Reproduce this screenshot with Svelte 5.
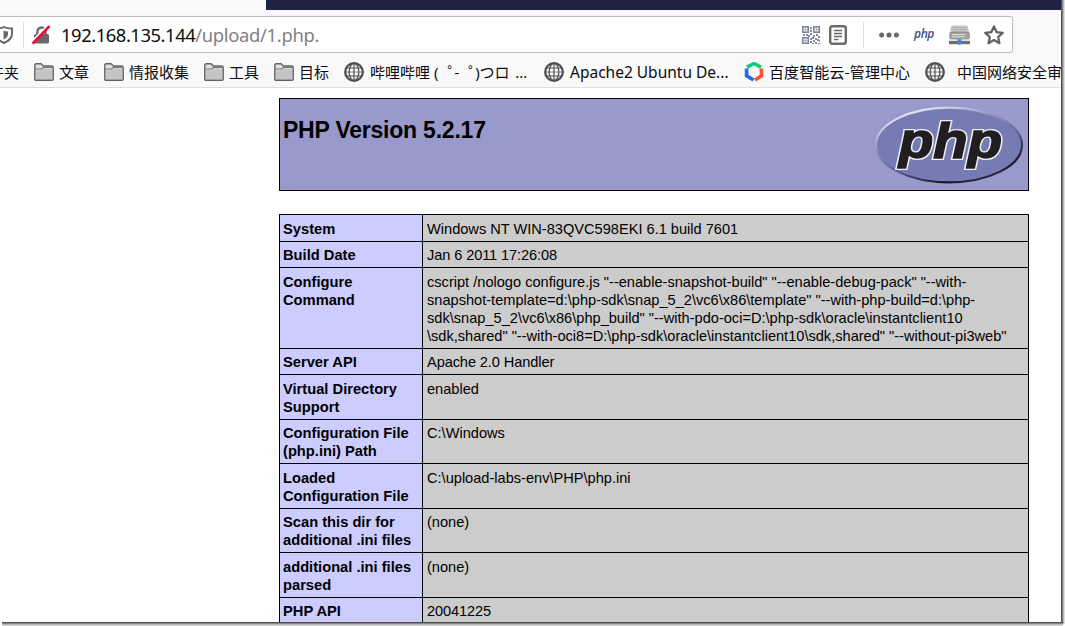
<script>
  const rows = [
    { h: 27, key: ['System'], value: ['Windows NT WIN-83QVC598EKI 6.1 build 7601'] },
    { h: 26, key: ['Build Date'], value: ['Jan 6 2011 17:26:08'], tight: true },
    {
      h: 81,
      key: ['Configure', 'Command'],
      value: [
        'cscript /nologo configure.js "--enable-snapshot-build" "--enable-debug-pack" "--with-',
        'snapshot-template=d:\\php-sdk\\snap_5_2\\vc6\\x86\\template" "--with-php-build=d:\\php-',
        'sdk\\snap_5_2\\vc6\\x86\\php_build" "--with-pdo-oci=D:\\php-sdk\\oracle\\instantclient10',
        '\\sdk,shared" "--with-oci8=D:\\php-sdk\\oracle\\instantclient10\\sdk,shared" "--without-pi3web"'
      ]
    },
    { h: 26, key: ['Server API'], value: ['Apache 2.0 Handler'], tight: true },
    { h: 45, key: ['Virtual Directory', 'Support'], value: ['enabled'] },
    { h: 44, key: ['Configuration File', '(php.ini) Path'], value: ['C:\\Windows'] },
    { h: 45, key: ['Loaded', 'Configuration File'], value: ['C:\\upload-labs-env\\PHP\\php.ini'] },
    { h: 44, key: ['Scan this dir for', 'additional .ini files'], value: ['(none)'] },
    { h: 45, key: ['additional .ini files', 'parsed'], value: ['(none)'] },
    { h: 26, key: ['PHP API'], value: ['20041225'], tight: true }
  ];
  const qr = [
    [0, 0], [11, 0], [0, 11]
  ];
  const bits = [[8,1],[8,4],[8,7],[1,8],[4,8],[11,9],[14,8],[16,10],[10,11],[13,12],[11,14],[15,13],[17,14],[13,16],[10,17],[16,17],[8,12],[8,15],[6,9]];
</script>

{#snippet folder()}
  <svg class="folder" width="20" height="18" viewBox="0 0 20 18">
    <path d="M.8 16V2.300Q.8.8 2.300.8H7L9.400 3h8.300q1.500 0 1.500 1.500V16q0 1.200-1.200 1.200H2Q.8 17.200.8 16Z" fill="#e0e0e2" stroke="#626264" stroke-width="1.400" />
    <path d="M1.500 6h6l2-1.500h9" fill="none" stroke="#727274" stroke-width="1.200" />
    <path d="M2 7.200h6l2-1.500h8V16H2Z" fill="#c5c5c7" />
  </svg>
{/snippet}

{#snippet globe()}
  <svg class="globe" width="20" height="20" viewBox="0 0 20 20" fill="none" stroke="#515153">
    <circle cx="10" cy="10" r="8.800" stroke-width="2.300" />
    <ellipse cx="10" cy="10" rx="4.800" ry="8.600" stroke-width="1.300" />
    <path d="M10 1v18M2.500 6h15M2.500 14h15" stroke-width="1.200" />
    <path d="M1.500 10h17" stroke-width=".7" />
  </svg>
{/snippet}

<div class="stage">
  <div class="window">
    <div class="title"></div>
    <div class="nav">
      <div class="urlbar">
        <svg class="shield" width="14" height="18" viewBox="0 0 14 18">
          <path d="M-4 2.500Q2 2.200 4 1q2 1.200 8 1.500V8q0 5.500-8 9-8-3.500-8-9Z" fill="none" stroke="#68686a" stroke-width="2" />
          <path d="M4 4.500q2 .8 4.500 1V8q0 3.500-4.500 5.500Z" fill="#68686a" transform="translate(-.5)" />
        </svg>
        <i class="sep left"></i>
        <svg class="lock" width="20" height="20" viewBox="0 0 20 20">
          <path d="M5.500 10V6.500a4 4 0 0 1 8 0V10" fill="none" stroke="#68686a" stroke-width="2.400" />
          <rect x="2" y="9" width="15" height="9.500" rx="1.500" fill="#68686a" />
          <path d="M-1 17.500 16 .2" stroke="#fff" stroke-width="2" />
          <path d="M.5 18.500 17.500 1.200" stroke="#ff0039" stroke-width="2.600" />
        </svg>
        <div class="url"><b>192.168.135.144</b>/upload/1.php.</div>
        <div class="actions">
          <svg width="18" height="18" viewBox="0 0 18 18">
            {#each qr as [x, y]}
              <rect x={x + 0.8} y={y + 0.8} width="5.400" height="5.400" fill="none" stroke="#7e8697" stroke-width="1.600" />
              <rect x={x + 2.6} y={y + 2.6} width="1.800" height="1.800" fill="#7e8697" />
            {/each}
            {#each bits as [x, y]}
              <rect {x} {y} width="2" height="2" fill="#858c9b" />
            {/each}
          </svg>
          <svg class="reader" width="18" height="20" viewBox="0 0 18 20">
            <rect x="1.200" y="1.200" width="15.600" height="17.600" rx="2" fill="#fff" stroke="#6a6a6c" stroke-width="2.400" />
            <path d="M5 5.500h8M5 8.500h8M5 11.500h8M5 14.500h4.500" stroke="#6a6a6c" stroke-width="1.300" />
          </svg>
          <i class="sep right"></i>
          <svg class="dots" width="20" height="6" viewBox="0 0 20 6" fill="#68686a"><circle cx="2.600" cy="3" r="2.500" /><circle cx="10" cy="3" r="2.500" /><circle cx="17.400" cy="3" r="2.500" /></svg>
          <span class="mini">php</span>
          <svg class="drive" width="21" height="20" viewBox="0 0 21 20">
            <path d="M3.500.5h14q1 0 1.300 1L20.300 8H.7L2.200 1.500q.3-1 1.300-1Z" fill="#c6c6c6" />
            <path d="M4 2.500h13M3.400 4.500h14.200M2.800 6.500h15.400" stroke="#acacac" stroke-width=".8" />
            <rect x=".8" y="7.500" width="19.500" height="6.500" rx="1" fill="#a3a3a3" stroke="#858585" stroke-width=".8" />
            <path d="M3 9.500h13M3 11.800h13" stroke="#dcdcdc" />
            <rect x="8.500" y="14" width="4" height="2.500" fill="#888" />
            <rect y="15.800" width="21" height="3.400" fill="#707070" />
            <path d="m10.500 14.500 3 3-3 2.500-3-2.500Z" fill="#3f83ee" />
          </svg>
          <svg class="star" width="20" height="20" viewBox="0 0 20 20"><path d="m10 1.500 2.600 5.600 6.100.7-4.500 4.200 1.200 6.200-5.400-3.100-5.400 3.100 1.200-6.200L1.300 7.800l6.100-.7Z" fill="none" stroke="#626264" stroke-width="2.300" stroke-linejoin="round" /></svg>
        </div>
      </div>
    </div>
    <div class="bookmarks">
      <div class="mark first">件夹</div>
      <div class="mark m70">{@render folder()}<span>文章</span></div>
      <div class="mark m100">{@render folder()}<span>情报收集</span></div>
      <div class="mark m70">{@render folder()}<span>工具</span></div>
      <div class="mark m70">{@render folder()}<span>目标</span></div>
      <div class="mark m200">{@render globe()}<span>哔哩哔哩</span><span class="kao">(<span class="ring">゜</span>-<span class="ring">゜</span>)つロ<span class="more">...</span></span></div>
      <div class="mark m200">{@render globe()}<span class="latin">Apache2 Ubuntu De...</span></div>
      <div class="mark m181">
        <svg width="20" height="20" viewBox="0 0 20 20" fill="none" stroke-width="3.600">
          <path d="m3 5.200 7-3.700 7 3.700" stroke="#14c878" />
          <path d="M2.600 6.500v7.300L9.500 18" stroke="#2468f2" />
          <path d="M17.400 6.500v7.300L11 18" stroke="#ff4f38" />
        </svg>
        <span class="baidu">百度智能云-管理中心</span>
      </div>
      <div class="mark last">{@render globe()}<span>中国网络安全审</span></div>
    </div>
    <div class="page">
      <div class="info">
        <div class="head">
          <h1>PHP Version 5.2.17</h1>
          <svg class="logo" width="150" height="80" viewBox="0 0 150 80">
            <defs>
              <linearGradient id="rim" x1=".2" y1="0" x2=".8" y2="1">
                <stop offset="0" stop-color="#f4f4ff" /><stop offset=".3" stop-color="#9a9cc8" /><stop offset=".6" stop-color="#5c5f92" /><stop offset=".85" stop-color="#17172a" /><stop offset="1" stop-color="#333556" />
              </linearGradient>
            </defs>
            <ellipse cx="75" cy="40" rx="73" ry="37.300" fill="#777bb4" stroke="url(#rim)" stroke-width="2.200" />
            <g transform="translate(0 53) scale(1 .93)">
              <text class="word halo" x="25" y="0" textLength="103" lengthAdjust="spacingAndGlyphs">php</text>
              <text class="word" x="25" y="0" textLength="103" lengthAdjust="spacingAndGlyphs">php</text>
            </g>
          </svg>
        </div>
        <div class="table">
          {#each rows as row}
            <div class="row" class:snug={row.h === 26 || row.h === 44} style:height="{row.h}px">
              <div class="key">{#each row.key as line}<div>{line}</div>{/each}</div>
              <div class="value" class:tight={row.tight}>{#each row.value as line}<div>{line}</div>{/each}</div>
            </div>
          {/each}
        </div>
      </div>
    </div>
  </div>
</div>

<style>
  :global(body) { background: #fff; overflow: hidden; }
  .stage { width: 1065px; height: 626px; display: grid; grid-template: 622px 4px / 1061px 4px; overflow: hidden; position: relative; }
  .stage::before { content: ''; position: absolute; right: 0; top: 0; width: 4px; height: 624px; background: linear-gradient(90deg, #505050 0 25%, #858585 25% 50%, #b5b5b5 50% 75%, #dedede 75%); }
  .stage::after { content: ''; position: absolute; left: 2px; bottom: 0; width: 1061px; height: 4px; background: linear-gradient(#505050 0 25%, #858585 25% 50%, #b5b5b5 50% 75%, #dedede 75%); }
  .window { width: 1061px; height: 622px; overflow: hidden; background: #fff; display: flex; flex-direction: column; }
  .title { height: 10px; flex: none; margin-left: 266px; background: #1f2340; box-shadow: -266px 0 #f9f9fa; }
  .nav { height: 43px; flex: none; background: #f9f9fa; padding-top: 6px; box-sizing: border-box; }
  .urlbar { width: 1013px; height: 37px; box-sizing: border-box; border: 1px solid #bebebe; border-left: 0; border-radius: 0 3px 3px 0; background: #fff; display: flex; align-items: center; box-shadow: 0 1px 4px rgba(0, 0, 0, .07); }
  .sep { display: block; width: 1px; height: 26px; background: #dcdcde; }
  .left { margin: 0 8px 0 9px; }
  .lock { margin-right: 9px; }
  .url { font: 18.4px/30px "Noto Sans", sans-serif; color: #818183; letter-spacing: -.32px; white-space: nowrap; padding-top: 1px; }
  .url b { font-weight: 400; color: #0c0c0d; letter-spacing: -.45px; }
  .actions { margin-left: auto; display: flex; align-items: center; padding-right: 8px; }
  .reader { margin-left: 9px; }
  .right { margin: 0 15px 0 16px; }
  .mini { font: italic 600 12px/16px "Open Sans", sans-serif; color: #464c89; margin: -1px 15px 0; width: 20px; letter-spacing: -.4px; }
  .star { margin-left: 14px; }
  .bookmarks { height: 35px; flex: none; box-sizing: border-box; border-bottom: 1px solid #dedee0; background: #f9f9fa; display: flex; align-items: center; padding-top: 4px; font: 15px/20px "Noto Sans CJK SC", sans-serif; color: #0c0c0d; white-space: nowrap; }
  .mark { display: flex; align-items: center; flex: none; gap: 5px; height: 30px; }
  .first { width: 45px; margin-left: -11px; }
  .m70 { width: 70px; }
  .m100 { width: 100px; }
  .m200 { width: 200px; gap: 6px; }
  .m181 { width: 181px; }
  .baidu { letter-spacing: .1px; }
  .last { gap: 12px; }
  .kao { font-family: "Noto Sans", "Noto Sans CJK JP", sans-serif; letter-spacing: -.1px; margin-left: -2px; }
  .ring { display: inline-block; width: 16px; text-indent: 9px; overflow: clip; font-family: "Noto Sans CJK JP", sans-serif; line-height: 18px; }
  .more { margin-left: 6px; }
  .latin { font: 15.500px/20px "Noto Sans", sans-serif; }
  .page { flex: 1; padding: 10px 0 0 279px; }
  .info { width: 750px; font-family: "Liberation Sans", Arial, sans-serif; color: #000; }
  .head { height: 93px; box-sizing: border-box; border: 1px solid #000; background: #9999cc; display: flex; justify-content: space-between; align-items: flex-start; padding: 6px 4px 0 3px; }
  h1 { font-size: 23px; letter-spacing: -.22px; line-height: 26px; margin: 12px 0 0; }
  .word { font: italic bold 53px "Liberation Sans", sans-serif; fill: #211e22; stroke: #211e22; stroke-width: 1.6px; }
  .halo { stroke: #f0f0f5; stroke-width: 4.400px; }
  .table { margin-top: 23px; border: solid #000; border-width: 1px 1px 0; font-size: 14.6px; line-height: 18px; white-space: nowrap; }
  .row { display: grid; grid-template-columns: 143px 1fr; box-sizing: border-box; border-bottom: 1px solid #000; }
  .key { box-sizing: border-box; background: #ccccff; border-right: 1px solid #000; font-weight: 700; font-size: 14.7px; padding: 5px 3px 0; }
  .value { background: #ccc; padding: 5px 4px 0; }
  .snug > div { padding-top: 4px; }
  .tight { letter-spacing: -.1px; }
</style>
